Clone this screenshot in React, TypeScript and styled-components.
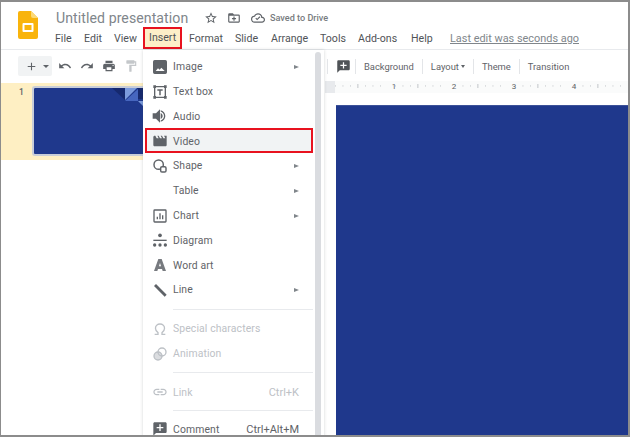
import React from "react";
import styled, { createGlobalStyle } from "styled-components";

const Global = createGlobalStyle`
  html, body { margin: 0; padding: 0; background: #fff; }
  body { font-family: Roboto, "Liberation Sans", sans-serif; }
`;

const Frame = styled.div`
  position: relative; box-sizing: border-box; width: 630px; height: 437px; overflow: hidden;
  background: #fff; border: solid #8c8c8c; border-width: 2px 2px 2px 1px;
  display: flex; flex-direction: column;
`;
const Header = styled.header`
  height: 48px; flex: none; box-sizing: border-box; display: flex; padding: 7px 0 0 17px;
  border-bottom: 1px solid #e8eaed;
`;
const Logo = styled.svg`width: 20px; height: 28px; flex: none; margin: 2px 18px 0 0;`;
const TitleColumn = styled.div`display: flex; flex-direction: column;`;
const TitleRow = styled.div`display: flex; align-items: center; height: 17px; margin-bottom: 1px;`;
const Title = styled.div`font-size: 14.1px; color: #80868b; letter-spacing: .08px; width: 148px; white-space: nowrap;`;
const HeadIcon = styled.svg<{ $gap?: number }>`width: 14px; height: 14px; flex: none; margin-right: ${p => p.$gap ?? 9}px; fill: #5f6368;`;
const Saved = styled.span`font-size: 9.1px; font-weight: 500; color: #777b80; white-space: nowrap;`;
const MenuBar = styled.nav`display: flex; align-items: center; height: 22px; margin-left: -1px;`;
const MenuName = styled.span<{ $w: number; $on?: boolean }>`
  box-sizing: border-box; flex: none; width: ${p => p.$w}px; font-size: 10.6px; color: #4f5357; white-space: nowrap;
  ${p => p.$on && `height: 22px; line-height: 17px; border: 2.5px solid #e8121f; background: #fdefc8; padding-left: 4px; margin-right: 7px;`}
`;
const LastEdit = styled.span`font-size: 10.9px; color: #80868b; text-decoration: underline; margin-left: 11px; white-space: nowrap;`;

const Tools = styled.div`height: 31px; flex: none; display: flex; box-sizing: border-box; padding-top: 6px;`;
const LeftTools = styled.div`width: 326px; flex: none; display: flex; align-items: flex-start; padding-left: 17px; box-sizing: border-box;`;
const AddBox = styled.div`width: 34px; height: 20px; background: #f1f3f4; border-radius: 2px; display: flex; align-items: center; gap: 5px; padding-left: 7px; box-sizing: border-box; margin-right: 6px;`;
const ToolIcon = styled.svg<{ $faded?: boolean }>`width: 14px; height: 14px; flex: none; margin: 3px 8px 0 0; fill: ${p => p.$faded ? "#c4c7ca" : "#5f6368"};`;
const PlusIcon = styled.svg`width: 13px; height: 13px; fill: #5f6368;`;
const Caret = styled.i`width: 0; height: 0; border: 3px solid transparent; border-top: 3px solid #5f6368; border-bottom: 0;`;
const RightTools = styled.div`flex: 1; display: flex; align-items: center; height: 20px;`;
const Sep = styled.span`width: 1px; height: 15px; background: #e3e5e8; flex: none;`;
const CommentTool = styled.svg`width: 15px; height: 15px; fill: #4f5357; margin: 0 4.5px 0 7.5px; flex: none;`;
const ToolText = styled.span`font-size: 9.4px; color: #5f6368; padding: 0 8px; white-space: nowrap; display: flex; align-items: center; gap: 2px;`;
const ToolCaret = styled.i`width: 0; height: 0; border: 2.5px solid transparent; border-top: 3px solid #5f6368; border-bottom: 0; margin-top: 1px;`;

const Body = styled.div`flex: 1; display: flex; min-height: 0;`;
const Film = styled.div`width: 142px; flex: none; display: flex; flex-direction: column;`;
const FilmItem = styled.div`margin-top: 2px; height: 77px; background: #feefc3; display: flex; box-sizing: border-box; padding: 3px 0 0 0;`;
const FilmNo = styled.span`width: 31px; flex: none; font-size: 8.5px; font-weight: 500; color: #5f6368; padding: 1px 0 0 18px; box-sizing: border-box;`;
const Thumb = styled.div`flex: 1; position: relative; height: 70px; box-sizing: border-box; background: #1f388c; border: 2px solid #c8cdd8; border-right: 0; border-radius: 3px 0 0 3px; overflow: hidden;`;
const ThumbArt = styled.svg`position: absolute; top: 0; right: 0; width: 36px; height: 22px;`;
const Editor = styled.main`flex: 1; display: flex; flex-direction: column; margin-left: 182px; min-width: 0;`;
const Ruler = styled.svg`width: 305px; height: 12px; flex: none; display: block;`;
const Slide = styled.div`flex: 1; background: #1f388c; margin: 12px -2px 0 11px; border-top: 1px solid #3c5198;`;

const Menu = styled.div`
  position: absolute; left: 142px; top: 48px; bottom: -12px; width: 181px; box-sizing: border-box; background: #fff;
  padding: 4.4px 10px 0 0; box-shadow: 0 0 3px rgba(60,64,67,.22);
`;
const Thumbbar = styled.div`position: absolute; right: 3px; top: 2px; bottom: 0; width: 6px; background: #dadce0; border-radius: 3px 3px 0 0;`;
const Row = styled.div<{ $on?: boolean; $off?: boolean }>`
  height: 24.8px; box-sizing: border-box; display: flex; align-items: center; padding: 0 15px 0 9px;
  color: ${p => p.$off ? "#bdc1c6" : "#5f6368"};
  ${p => p.$on && `background: #f1f3f4; border: 2.5px solid #e8121f; height: 25px; margin: -1.2px 1px 1px 2px; padding: 2px 13px 0 5px;`}
`;
const RowIcon = styled.svg`width: 16px; height: 16px; flex: none; margin-right: 5px; fill: currentColor;`;
const Blank = styled.span`width: 16px; margin-right: 5px; flex: none;`;
const RowLabel = styled.span`flex: 1; font-size: 10.4px; letter-spacing: .12px; white-space: nowrap;`;
const Arrow = styled.i`width: 0; height: 0; border-left: 5.5px solid #80868b; border-top: 2.5px solid transparent; border-bottom: 2.5px solid transparent;`;
const Shortcut = styled.span`font-size: 11px; white-space: nowrap;`;
const Divider = styled.hr<{ $m: number }>`border: 0; height: 1px; background: #e8eaed; margin: ${p => p.$m}px 1px ${p => p.$m}px 30px;`;

const P = {
  image: "M22.5 20V4a2.5 2.5 0 0 0-2.5-2.5H4A2.5 2.5 0 0 0 1.500 4v16A2.500 2.500 0 0 0 4 22.500h16a2.500 2.500 0 0 0 2.500-2.500zM5.500 18l3.500-4 2.500 2 2.500-3 5 5H5.500z",
  audio: "M1 8v8h5l6 6V2L6 8H1zm15 4c0-2-1.200-3.800-3-4.600v9.200c1.800-.8 3-2.600 3-4.600zM13 3.200v2.100c2.900.9 5 3.500 5 6.700s-2.100 5.800-5 6.700v2.100c4-.9 7-4.500 7-8.800s-3-7.900-7-8.800z",
  movie: "M18 4l2 4h-3l-2-4h-2l2 4h-3l-2-4H8l2 4H7L5 4H4c-1.1 0-1.99.9-1.99 2L2 18c0 1.1.9 2 2 2h16c1.1 0 2-.9 2-2V4h-4z",
  link: "M3.9 12c0-1.71 1.39-3.1 3.1-3.1h4V7H7c-2.76 0-5 2.24-5 5s2.24 5 5 5h4v-1.9H7c-1.71 0-3.1-1.39-3.1-3.1zM8 13h8v-2H8v2zm9-6h-4v1.9h4c1.71 0 3.1 1.39 3.1 3.1s-1.39 3.1-3.1 3.1h-4V17h4c2.76 0 5-2.24 5-5s-2.24-5-5-5z",
  comment: "M20 2H4c-1.1 0-2 .9-2 2v18l4-4h14c1.1 0 2-.9 2-2V4c0-1.1-.9-2-2-2zm-3 9h-4v4h-2v-4H7V9h4V5h2v4h4v2z",
  star: "M22 9.24l-7.19-.62L12 2 9.19 8.63 2 9.24l5.46 4.73L5.82 21 12 17.27 18.18 21l-1.63-7.03L22 9.24zM12 15.4l-3.76 2.27 1-4.28-3.32-2.88 4.38-.38L12 6.1l1.71 4.04 4.38.38-3.32 2.88 1 4.28L12 15.4z",
  undo: "M12.5 8c-2.65 0-5.05.99-6.9 2.6L2 7v9h9l-3.62-3.62c1.39-1.16 3.16-1.88 5.12-1.88 3.54 0 6.55 2.31 7.6 5.5l2.37-.78C21.08 11.03 17.15 8 12.5 8z",
  redo: "M18.4 10.6C16.55 8.99 14.15 8 11.5 8c-4.65 0-8.58 3.03-9.96 7.22L3.9 16c1.05-3.19 4.05-5.5 7.6-5.5 1.95 0 3.73.72 5.12 1.88L13 16h9V7l-3.6 3.6z",
  print: "M19 8H5c-1.66 0-3 1.34-3 3v6h4v4h12v-4h4v-6c0-1.66-1.34-3-3-3zm-3 11H8v-5h8v5zm3-7c-.55 0-1-.45-1-1s.45-1 1-1 1 .45 1 1-.45 1-1 1zm-1-9H6v4h12V3z",
  paint: "M18 4V3c0-.55-.45-1-1-1H5c-.55 0-1 .45-1 1v4c0 .55.45 1 1 1h12c.55 0 1-.45 1-1V6h1v4H9v11c0 .55.45 1 1 1h2c.55 0 1-.45 1-1v-9h8V4h-3z",
  plus: "M19 13h-6v6h-2v-6H5v-2h6V5h2v6h6v2z",
  folder: "M20 6h-8l-2-2H4a2 2 0 0 0-2 2v12a2 2 0 0 0 2 2h16a2 2 0 0 0 2-2V8a2 2 0 0 0-2-2zm0 12H4V8h16v10zM11 9.5h2V12h2.5v2H13v2.5h-2V14H8.5v-2H11z",
  cloud: "M19.35 10.04A7.49 7.49 0 0 0 12 4C9.11 4 6.6 5.64 5.35 8.04A5.994 5.994 0 0 0 0 14c0 3.31 2.69 6 6 6h13c2.76 0 5-2.24 5-5 0-2.64-2.05-4.78-4.65-4.96zM19 18H6c-2.21 0-4-1.79-4-4s1.79-4 4-4h.71A5.5 5.5 0 0 1 12 6a5.5 5.5 0 0 1 5.45 4.8l.15 1.2H19a3 3 0 0 1 0 6zM10.5 16l-3-3 1.4-1.4 1.6 1.6 4.1-4.1 1.4 1.4-5.5 5.5z",
};

const Icon = ({ kind }: { kind: string }) => {
  switch (kind) {
    case "textbox":
      return <RowIcon viewBox="0 0 24 24"><path d="M4 4h16v16H4z" fill="none" stroke="currentColor" strokeWidth="2" /><path d="M2 2h4v4H2zM18 2h4v4h-4zM2 18h4v4H2zM18 18h4v4h-4zM8 8h8v2.2h-2.9V17h-2.2v-6.8H8z" /></RowIcon>;
    case "shape":
      return <RowIcon viewBox="0 0 24 24"><circle cx="10" cy="10" r="7" fill="none" stroke="currentColor" strokeWidth="2.2" /><rect x="13" y="13" width="8" height="8" rx="2" fill="#fff" stroke="currentColor" strokeWidth="2.2" /></RowIcon>;
    case "chart":
      return <RowIcon viewBox="0 0 24 24"><path fillRule="evenodd" d="M4 2h16a2 2 0 0 1 2 2v16a2 2 0 0 1-2 2H4a2 2 0 0 1-2-2V4a2 2 0 0 1 2-2zm0 2v16h16V4H4zm3 13v-4h2v4H7zm4 0V8h2v9h-2zm4 0v-6h2v6h-2z" /></RowIcon>;
    case "diagram":
      return <RowIcon viewBox="0 0 24 24"><circle cx="12" cy="5" r="2.8" /><circle cx="4" cy="19.500" r="2.500" /><circle cx="12" cy="19.500" r="2.500" /><circle cx="20" cy="19.500" r="2.500" /><path d="M2 11.500h20v2H2z" /></RowIcon>;
    case "wordart":
      return <RowIcon viewBox="0 0 24 24"><path fillRule="evenodd" opacity=".85" d="M9.500 3h5L21 21h-5l-1-3H9l-1 3H3L9.500 3zm.9 11h3.200L12 9l-1.600 5z" /></RowIcon>;
    case "line":
      return <RowIcon viewBox="0 0 24 24"><path d="M3 6L6 3l16 16-3 3z" /></RowIcon>;
    case "omega":
      return <RowIcon viewBox="0 0 24 24"><path d="M4 20h5v-2.600C6.800 16 5.200 13.600 5.200 11 5.200 7.200 8.200 4.500 12 4.500s6.800 2.700 6.800 6.500c0 2.600-1.600 5-3.800 6.400V20h5" fill="none" stroke="currentColor" strokeWidth="2" /></RowIcon>;
    case "animation":
      return <RowIcon viewBox="0 0 24 24"><g fill="none" stroke="currentColor" strokeWidth="2"><circle cx="15" cy="9" r="6" /><circle cx="9" cy="15" r="6" fill="currentColor" fillOpacity=".55" /></g></RowIcon>;
    default:
      return <RowIcon viewBox="0 0 24 24"><path d={(P as Record<string, string>)[kind]} /></RowIcon>;
  }
};

type Item = { label: string; icon?: string; arrow?: boolean; on?: boolean; off?: boolean; keys?: string };
const GroupA: Item[] = [
  { label: "Image", icon: "image", arrow: true },
  { label: "Text box", icon: "textbox" },
  { label: "Audio", icon: "audio" },
  { label: "Video", icon: "movie", on: true },
  { label: "Shape", icon: "shape", arrow: true },
  { label: "Table", arrow: true },
  { label: "Chart", icon: "chart", arrow: true },
  { label: "Diagram", icon: "diagram" },
  { label: "Word art", icon: "wordart" },
  { label: "Line", icon: "line", arrow: true },
];
const GroupB: Item[] = [
  { label: "Special characters", icon: "omega", off: true },
  { label: "Animation", icon: "animation", off: true },
];
const MenuRow = ({ it }: { it: Item }) => (
  <Row $on={it.on} $off={it.off}>
    {it.icon ? <Icon kind={it.icon} /> : <Blank />}
    <RowLabel>{it.label}</RowLabel>
    {it.arrow && <Arrow />}
    {it.keys && <Shortcut>{it.keys}</Shortcut>}
  </Row>
);

const menuNames: [string, number, boolean?][] = [
  ["File", 29], ["Edit", 30], ["View", 29], ["Insert", 39, true], ["Format", 46], ["Slide", 36], ["Arrange", 49], ["Tools", 38], ["Add-ons", 53], ["Help", 28],
];

const RulerMarks = () => {
  const marks: React.ReactNode[] = [];
  for (let i = 0; i < 48; i++) {
    const x = 10 + i * 7.5;
    if (i % 8 === 7) continue;
    marks.push(i % 4 === 3
      ? <rect key={i} x={x} y={3} width={0.8} height={4} fill="#b4b8bd" />
      : <rect key={i} x={x} y={4.5} width={0.9} height={0.9} fill="#b4b8bd" />);
  }
  return <>{marks}</>;
};

export default function App() {
  return (
    <>
      <Global />
      <Frame>
        <Header>
          <Logo viewBox="0 0 20 28">
            <path d="M2 0h11l7 7v19a2 2 0 0 1-2 2H2a2 2 0 0 1-2-2V2a2 2 0 0 1 2-2z" fill="#f9b40c" />
            <path d="M13 0l7 7h-5a2 2 0 0 1-2-2z" fill="#fcd976" />
            <path fillRule="evenodd" d="M5.500 12h9a1 1 0 0 1 1 1v7a1 1 0 0 1-1 1h-9a1 1 0 0 1-1-1v-7a1 1 0 0 1 1-1zm1 2v5h7v-5h-7z" fill="#fff" />
          </Logo>
          <TitleColumn>
            <TitleRow>
              <Title>Untitled presentation</Title>
              <HeadIcon viewBox="0 0 24 24"><path d={P.star} /></HeadIcon>
              <HeadIcon viewBox="0 0 24 24" $gap={10}><path d={P.folder} /></HeadIcon>
              <HeadIcon viewBox="0 0 24 24" $gap={5}><path d={P.cloud} /></HeadIcon>
              <Saved>Saved to Drive</Saved>
            </TitleRow>
            <MenuBar>
              {menuNames.map(([n, w, on]) => <MenuName key={n} $w={w} $on={on}>{n}</MenuName>)}
              <LastEdit>Last edit was seconds ago</LastEdit>
            </MenuBar>
          </TitleColumn>
        </Header>
        <Tools>
          <LeftTools>
            <AddBox>
              <PlusIcon viewBox="0 0 24 24"><path d={P.plus} /></PlusIcon>
              <Caret />
            </AddBox>
            <ToolIcon viewBox="0 0 24 24"><path d={P.undo} /></ToolIcon>
            <ToolIcon viewBox="0 0 24 24"><path d={P.redo} /></ToolIcon>
            <ToolIcon viewBox="0 0 24 24"><path d={P.print} /></ToolIcon>
            <ToolIcon viewBox="0 0 24 24" $faded><path d={P.paint} /></ToolIcon>
          </LeftTools>
          <RightTools>
            <Sep />
            <CommentTool viewBox="0 0 24 24"><path d={P.comment} /></CommentTool>
            <Sep />
            <ToolText>Background</ToolText>
            <Sep />
            <ToolText>Layout<ToolCaret /></ToolText>
            <Sep />
            <ToolText>Theme</ToolText>
            <Sep />
            <ToolText>Transition</ToolText>
          </RightTools>
        </Tools>
        <Body>
          <Film>
            <FilmItem>
              <FilmNo>1</FilmNo>
              <Thumb>
                <ThumbArt viewBox="0 0 36 22">
                  <path d="M5 0h13v12z" fill="#16296e" />
                  <path d="M18 0h12L18 12z" fill="#7c9bdc" />
                  <path d="M18 13L31 1v12z" fill="#4666bf" />
                  <path d="M30 0h6v11h-5V1z" fill="#16296e" />
                  <path d="M31 13h5v5z" fill="#7c9bdc" />
                </ThumbArt>
              </Thumb>
            </FilmItem>
          </Film>
          <Editor>
            <Ruler viewBox="0 0 305 12">
              <rect x="0" y="0" width="10" height="12" fill="#e8eaed" />
              <rect x="10" y="0" width="295" height="12" fill="#fafbfb" />
              <RulerMarks />
              <text x="69" y="7.5" fontSize="8" textAnchor="middle" fill="#5f6368" fontFamily="Roboto">1</text>
              <text x="129" y="7.5" fontSize="8" textAnchor="middle" fill="#5f6368" fontFamily="Roboto">2</text>
              <text x="189" y="7.5" fontSize="8" textAnchor="middle" fill="#5f6368" fontFamily="Roboto">3</text>
              <text x="249" y="7.5" fontSize="8" textAnchor="middle" fill="#5f6368" fontFamily="Roboto">4</text>
            </Ruler>
            <Slide />
          </Editor>
        </Body>
        <Menu>
          <Thumbbar />
          {GroupA.map(it => <MenuRow key={it.label} it={it} />)}
          <Divider $m={6.5} />
          {GroupB.map(it => <MenuRow key={it.label} it={it} />)}
          <Divider $m={6.5} />
          <MenuRow it={{ label: "Link", icon: "link", off: true, keys: "Ctrl+K" }} />
          <Divider $m={5.5} />
          <MenuRow it={{ label: "Comment", icon: "comment", keys: "Ctrl+Alt+M" }} />
        </Menu>
      </Frame>
    </>
  );
}
